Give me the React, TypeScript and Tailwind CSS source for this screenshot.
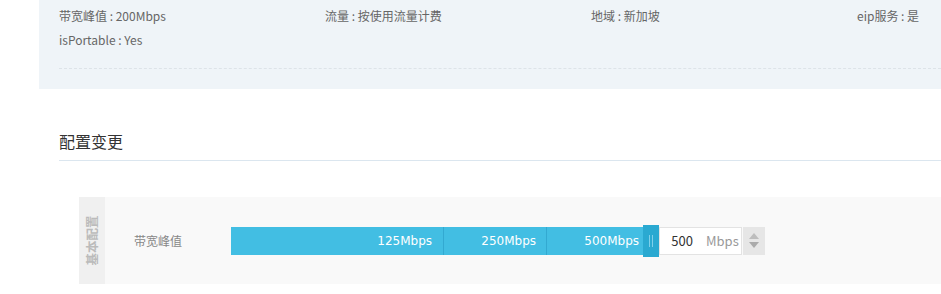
const font = { fontFamily: '"Noto Sans CJK SC", "Noto Sans", sans-serif' }

export default function App() {
  return (
    <div className="w-[941px] h-[294px] bg-white overflow-hidden text-[12px] text-[#666]" style={font}>
      {/* Info panel */}
      <div className="ml-[39px] h-[89px] bg-[#eff4f8] pl-[20px] pt-[4px] overflow-hidden">
        <div className="grid grid-cols-[266px_266px_266px_266px] w-[1064px] leading-[24px]">
          <div>带宽峰值 : 200Mbps</div>
          <div>流量 : 按使用流量计费</div>
          <div>地域 : 新加坡</div>
          <div>eip服务 : 是</div>
          <div>isPortable : Yes</div>
        </div>
        <div className="mt-[16px] border-t border-dashed border-[#dde3e8]" />
      </div>

      {/* Section title */}
      <div className="ml-[59px] mt-[40px]">
        <h2 className="text-[16px] leading-[24px] text-[#333] pb-[7px] border-b border-[#dbe6ef]">配置变更</h2>
      </div>

      {/* Config panel */}
      <div className="ml-[79px] mt-[36px] h-[87px] flex bg-[#f9f9f9]">
        <div className="w-[26px] bg-[#f0f0f0] flex items-center justify-center">
          <span className="-rotate-90 whitespace-nowrap font-bold text-[12.5px] text-[#bbb]">基本配置</span>
        </div>
        <div className="flex items-center pl-[29px]">
          <span className="w-[97px] text-[#888]">带宽峰值</span>
          <div className="flex items-center">
            <div className="flex h-[28px] bg-[#42bee3] text-white text-[12px] font-medium" style={{ fontFamily: '"DejaVu Sans", sans-serif' }}>
              <div className="w-[213px] flex items-center justify-end pr-[11px] border-r border-[#33a9d1]">125Mbps</div>
              <div className="w-[103px] flex items-center justify-end pr-[10px] border-r border-[#33a9d1]">250Mbps</div>
              <div className="w-[96px] flex items-center justify-end pr-[4px]">500Mbps</div>
            </div>
            <div className="w-[16px] h-[32px] bg-[#2aa9d1] flex items-center justify-center gap-[2px]">
              <span className="w-px h-[12px] bg-[#7fd0ea]" />
              <span className="w-px h-[12px] bg-[#7fd0ea]" />
            </div>
            <div className="w-[83px] h-[28px] bg-white border border-[#e3e3e3] flex items-center text-[13px]">
              <span className="w-[33px] text-right text-[#333]">500</span>
              <span className="ml-[13px] text-[#999]">Mbps</span>
            </div>
            <div className="ml-[1px] w-[22px] h-[28px] bg-[#e6e6e6] flex flex-col items-center justify-center gap-[3px]">
              <svg width="10" height="6" viewBox="0 0 10 6"><path d="M5 0 L10 6 L0 6 Z" fill="#bdbdbd" /></svg>
              <svg width="10" height="6" viewBox="0 0 10 6"><path d="M0 0 L10 0 L5 6 Z" fill="#aaa" /></svg>
            </div>
          </div>
        </div>
      </div>
    </div>
  )
}
